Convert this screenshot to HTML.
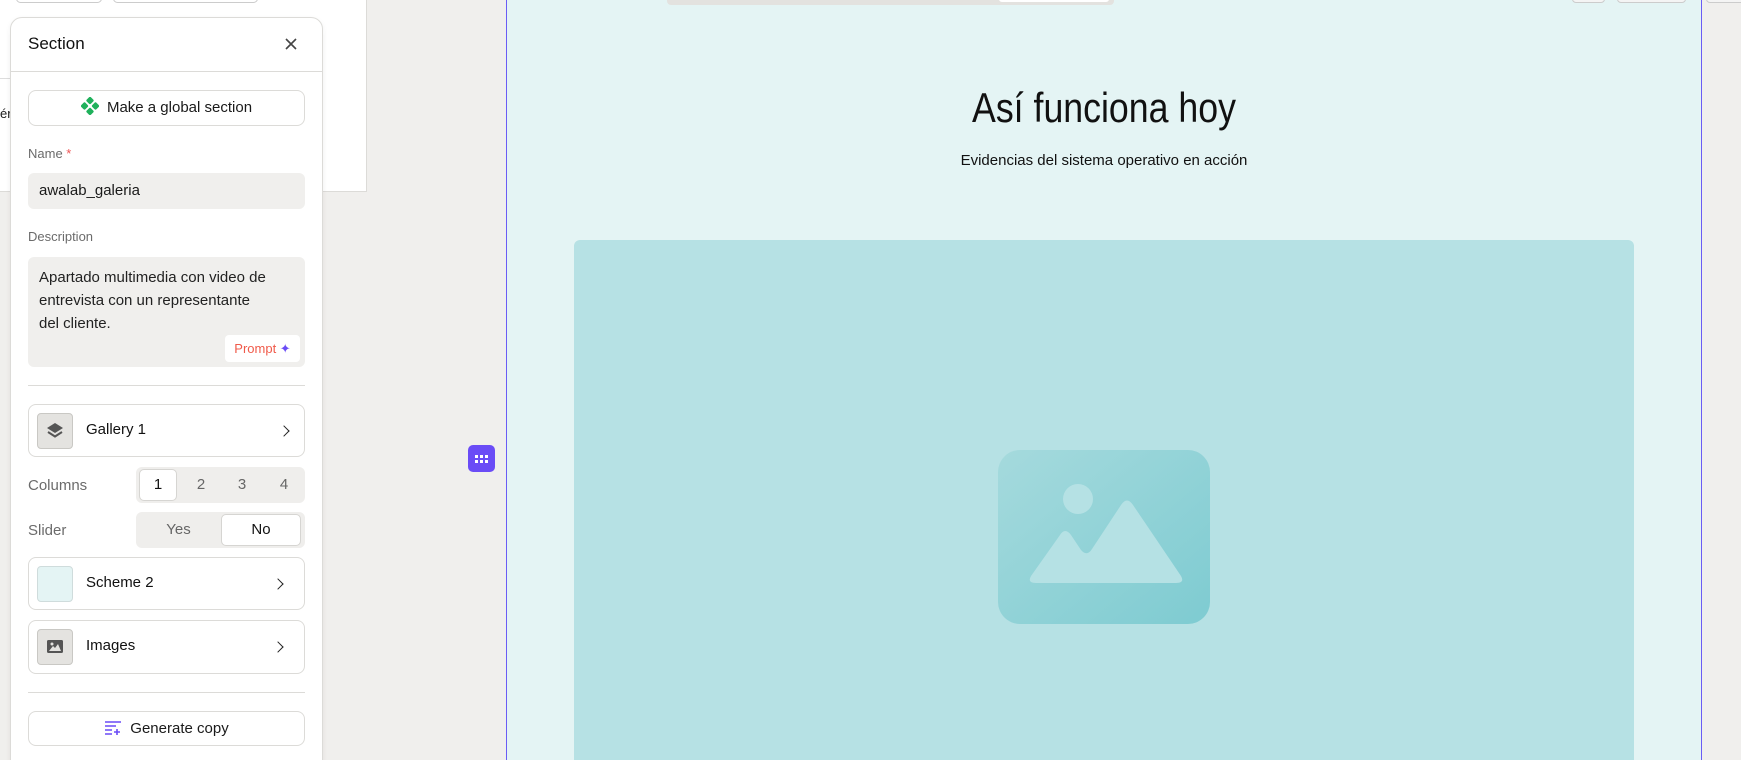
<!DOCTYPE html>
<html><head><meta charset="utf-8"><style>
*{box-sizing:border-box;margin:0;padding:0}
html,body{width:1741px;height:760px;overflow:hidden}
body{background:#f0efed;font-family:"Liberation Sans",sans-serif;color:#1a1a1a}
#w{position:relative;width:1741px;height:760px;overflow:hidden}
.a{position:absolute}
.card{position:absolute;left:28px;width:277px;background:#fff;border:1px solid #dcdbd8;border-radius:8px}
.lbl{position:absolute;left:28px;font-size:13px;color:#6b6b6b}
.ib{position:absolute;left:8px;width:36px;height:36px;border-radius:4px;border:1px solid #c9c8c4;background:#e4e3e0}
.ct{position:absolute;left:57px;font-size:15px;color:#111}
.chev{position:absolute;right:16px;width:8px;height:8px;border-right:1.6px solid #222;border-top:1.6px solid #222;transform:rotate(45deg)}
.seg{position:absolute;left:136px;width:169px;height:36px;background:#efeeec;border-radius:6px}
.seg span{position:absolute;top:0;height:36px;line-height:36px;text-align:center;font-size:15px;color:#666}
.on{background:#fff;border:1px solid #d6d5d2;border-radius:5px;color:#111!important;top:2px!important;height:32px!important;line-height:30px!important}
</style></head><body><div id="w">
<div class="a" style="left:0;top:0;width:367px;height:192px;background:#fff;border:1px solid #dcdbd8;border-top:none;border-left:none"></div>
<div class="a" style="left:16px;top:-6px;width:86px;height:9px;border:1px solid #ccc;border-radius:5px;background:#fff"></div>
<div class="a" style="left:113px;top:-6px;width:145px;height:9px;border:1px solid #ccc;border-radius:5px;background:#fff"></div>
<div class="a" style="left:0;top:78px;width:12px;height:1px;background:#ddd"></div>
<div class="a" style="left:0;top:106px;font-size:13px">ér</div>

<div class="a" style="left:506px;top:0;width:1196px;height:760px;background:#e4f4f4;border-left:1.5px solid #6a5cf5;border-right:1.5px solid #6a5cf5"></div>
<div class="a" style="left:667px;top:-4px;width:447px;height:9px;background:#e3e2df;border-radius:4px"></div>
<div class="a" style="left:999px;top:-4px;width:110px;height:6px;background:#fff;border-radius:3px"></div>
<div class="a" style="left:1572px;top:-6px;width:33px;height:9px;border:1px solid #ccc;border-radius:4px;background:#f4f4f4"></div>
<div class="a" style="left:1617px;top:-6px;width:69px;height:9px;border:1px solid #ccc;border-radius:4px;background:#f4f4f4"></div>
<div class="a" style="left:1706px;top:-6px;width:40px;height:9px;border:1px solid #ccc;border-radius:4px;background:#f4f4f4"></div>
<div class="a" style="left:804px;top:84px;width:600px;text-align:center;font-size:42px;color:#111;transform:scaleX(.85)">Así funciona hoy</div>
<div class="a" style="left:804px;top:152px;width:600px;text-align:center;font-size:15px;color:#111">Evidencias del sistema operativo en acción</div>
<div class="a" style="left:574px;top:240px;width:1060px;height:530px;background:#b6e1e4;border-radius:6px"></div>
<svg class="a" style="left:0;top:0" width="1741" height="760">
<defs><linearGradient id="g" x1="0" y1="0" x2="1" y2="1"><stop offset="0" stop-color="#a5dadd"/><stop offset="1" stop-color="#7ecbd1"/></linearGradient></defs>
<rect x="998" y="450" width="212" height="174" rx="22" fill="url(#g)"/>
<circle cx="1078" cy="499" r="15" fill="#b5e1e4"/>
<path d="M1031 576 L1060 535 Q1065 527 1071 535 L1081 550 Q1087 557 1092 549 L1121 505 Q1127 496 1133 505 L1181 576 Q1185 583 1176 583 L1036 583 Q1027 583 1031 576Z" fill="#b5e1e4"/>
</svg>
<div class="a" style="left:468px;top:445px;width:27px;height:27px;background:#6a4cf6;border-radius:5px"></div>
<svg class="a" style="left:475px;top:455px" width="15" height="9"><g fill="#fff"><rect x="0" y="0" width="3" height="3"/><rect x="5" y="0" width="3" height="3"/><rect x="10" y="0" width="3" height="3"/><rect x="0" y="5" width="3" height="3"/><rect x="5" y="5" width="3" height="3"/><rect x="10" y="5" width="3" height="3"/></g></svg>

<div class="a" style="left:10px;top:17px;width:313px;height:760px;background:#fff;border:1px solid #dcdbd8;border-radius:12px;box-shadow:0 2px 6px rgba(0,0,0,.06)"></div>
<div class="a" style="left:28px;top:34px;font-size:17px;color:#111">Section</div>
<svg class="a" style="left:285px;top:38px" width="12" height="12"><path d="M1 1L11 11M11 1L1 11" stroke="#444" stroke-width="1.6"/></svg>
<div class="a" style="left:11px;top:71px;width:311px;height:1px;background:#dcdbd8"></div>
<div class="card" style="top:90px;height:36px;text-align:center;line-height:34px;font-size:15px"><svg width="18" height="18" style="vertical-align:-3px;margin-right:8px"><g fill="#1fb15b"><rect x="6" y="0.5" width="6" height="6" rx="1.5" transform="rotate(45 9 3.5)"/><rect x="6" y="11.5" width="6" height="6" rx="1.5" transform="rotate(45 9 14.5)"/><rect x="0.5" y="6" width="6" height="6" rx="1.5" transform="rotate(45 3.5 9)"/><rect x="11.5" y="6" width="6" height="6" rx="1.5" transform="rotate(45 14.5 9)"/></g></svg>Make a global section</div>
<div class="lbl" style="top:146px">Name <span style="color:#e55">*</span></div>
<div class="a" style="left:28px;top:173px;width:277px;height:36px;background:#f0efed;border-radius:6px;padding-left:11px;line-height:36px;font-size:15px">awalab_galeria</div>
<div class="lbl" style="top:229px">Description</div>
<div class="a" style="left:28px;top:257px;width:277px;height:110px;background:#f0efed;border-radius:6px;padding:9px 36px 9px 11px;font-size:15px;line-height:23px;color:#222">Apartado multimedia con video de entrevista con un representante del cliente.</div>
<div class="a" style="left:225px;top:335px;width:75px;height:27px;background:#fff;border-radius:4px;font-size:13px;line-height:27px;text-align:center;color:#f05a4a">Prompt <span style="color:#6a4cf6">✦</span></div>
<div class="a" style="left:28px;top:385px;width:277px;height:1px;background:#dcdbd8"></div>

<div class="card" style="top:404px;height:53px"><div class="ib" style="top:8px"><svg width="34" height="34"><path d="M17 9l8 5-8 5-8-5z" fill="#555"/><path d="M10 18l7 4.5 7-4.5" stroke="#555" stroke-width="2" fill="none"/></svg></div><div class="ct" style="top:16px">Gallery 1</div><div class="chev" style="top:22px"></div></div>
<div class="lbl" style="top:477px;font-size:15px">Columns</div>
<div class="seg" style="top:467px"><span class="on" style="left:3px;width:38px">1</span><span style="left:45px;width:40px">2</span><span style="left:86px;width:40px">3</span><span style="left:128px;width:40px">4</span></div>
<div class="lbl" style="top:522px;font-size:15px">Slider</div>
<div class="seg" style="top:512px"><span style="left:0;width:85px">Yes</span><span class="on" style="left:85px;width:80px">No</span></div>
<div class="card" style="top:557px;height:53px"><div class="ib" style="top:8px;background:#e4f4f4;border-color:#cfdcdc"></div><div class="ct" style="top:16px">Scheme 2</div><div class="chev" style="top:22px;right:22px"></div></div>
<div class="card" style="top:620px;height:54px"><div class="ib" style="top:8px"><svg width="34" height="34"><rect x="9" y="10" width="16" height="13" rx="1.5" fill="#555"/><path d="M11 21l4-5 2 2 3-4 3 7z" fill="#e4e3e0"/><circle cx="14" cy="14" r="1.5" fill="#e4e3e0"/></svg></div><div class="ct" style="top:16px">Images</div><div class="chev" style="top:22px;right:22px"></div></div>
<div class="a" style="left:28px;top:692px;width:277px;height:1px;background:#dcdbd8"></div>
<div class="card" style="top:711px;height:35px;text-align:center;line-height:33px;font-size:15px"><svg width="18" height="14" style="vertical-align:-2px;margin-right:8px"><g stroke="#6a4cf6" stroke-width="1.6"><path d="M1 1h16M1 5h11M1 9h7M1 13h7"/><path d="M13 8v6M10 11h6"/></g></svg>Generate copy</div>
</div></body></html>
